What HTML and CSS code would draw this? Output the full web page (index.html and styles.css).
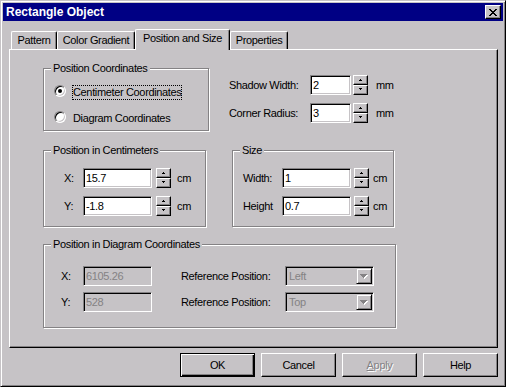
FILE: index.html
```html
<!DOCTYPE html>
<html lang="en">
  <head>
    <meta charset="UTF-8" />
    <title>Rectangle Object</title>
    <link rel="stylesheet" href="styles.css">
  </head>
  <body>
    <div class="window">
      <div class="titlebar">
        <span class="title">Rectangle Object</span>
        <span class="close-btn">
          <svg width="8" height="7" viewBox="0 0 8 7" shape-rendering="crispEdges">
            <path fill="#000" d="M0 0h2v1H0zM6 0h2v1H6zM1 1h2v1H1zM5 1h2v1H5zM2 2h4v1H2zM3 3h2v1H3zM2 4h4v1H2zM1 5h2v1H1zM5 5h2v1H5zM0 6h2v1H0zM6 6h2v1H6z"/>
          </svg>
        </span>
      </div>

      <div class="content">
        <div class="tabs">
          <div class="tab tab-pattern">Pattern</div>
          <div class="tab tab-gradient">Color Gradient</div>
          <div class="tab tab-position active">Position and Size</div>
          <div class="tab tab-props">Properties</div>
        </div>

        <div class="panel">
          <div class="row row-top">
            <div class="group group-coords">
              <span class="legend">Position Coordinates</span>
              <div class="radio-row first">
                <span class="radio checked"></span>
                <span class="radio-text focused">Centimeter Coordinates</span>
              </div>
              <div class="radio-row">
                <span class="radio"></span>
                <span class="radio-text">Diagram Coordinates</span>
              </div>
            </div>

            <div class="shadow-fields">
              <div class="field-row">
                <span class="lbl lbl-shadow">Shadow Width:</span>
                <span class="input in-short">2</span>
                <span class="spin"><span class="spin-btn"><i class="arr-up"></i></span><span class="spin-btn"><i class="arr-down"></i></span></span>
                <span class="unit unit-mm">mm</span>
              </div>
              <div class="field-row">
                <span class="lbl lbl-shadow">Corner Radius:</span>
                <span class="input in-short">3</span>
                <span class="spin"><span class="spin-btn"><i class="arr-up"></i></span><span class="spin-btn"><i class="arr-down"></i></span></span>
                <span class="unit unit-mm">mm</span>
              </div>
            </div>
          </div>

          <div class="row row-mid">
            <div class="group group-cm">
              <span class="legend">Position in Centimeters</span>
              <div class="fields">
                <div class="field-row">
                  <span class="lbl lbl-xy">X:</span>
                  <span class="input in-wide">15.7</span>
                  <span class="spin"><span class="spin-btn"><i class="arr-up"></i></span><span class="spin-btn"><i class="arr-down"></i></span></span>
                  <span class="unit unit-cm">cm</span>
                </div>
                <div class="field-row">
                  <span class="lbl lbl-xy">Y:</span>
                  <span class="input in-wide">-1.8</span>
                  <span class="spin"><span class="spin-btn"><i class="arr-up"></i></span><span class="spin-btn"><i class="arr-down"></i></span></span>
                  <span class="unit unit-cm">cm</span>
                </div>
              </div>
            </div>

            <div class="group group-size">
              <span class="legend">Size</span>
              <div class="fields">
                <div class="field-row">
                  <span class="lbl lbl-size">Width:</span>
                  <span class="input in-wide">1</span>
                  <span class="spin"><span class="spin-btn"><i class="arr-up"></i></span><span class="spin-btn"><i class="arr-down"></i></span></span>
                  <span class="unit unit-size">cm</span>
                </div>
                <div class="field-row">
                  <span class="lbl lbl-size">Height</span>
                  <span class="input in-wide">0.7</span>
                  <span class="spin"><span class="spin-btn"><i class="arr-up"></i></span><span class="spin-btn"><i class="arr-down"></i></span></span>
                  <span class="unit unit-size">cm</span>
                </div>
              </div>
            </div>
          </div>

          <div class="row row-bottom">
            <div class="group group-diagram">
              <span class="legend">Position in Diagram Coordinates</span>
              <div class="fields">
                <div class="field-row">
                  <span class="lbl lbl-dxy">X:</span>
                  <span class="input in-wide disabled">6105.26</span>
                  <span class="lbl lbl-ref">Reference Position:</span>
                  <span class="combo">
                    <span class="combo-text">Left</span>
                    <span class="combo-btn">
                      <svg width="8" height="5" viewBox="0 0 8 5" shape-rendering="crispEdges">
                        <path fill="#fff" d="M1 1h7v1H1zM2 2h5v1H2zM3 3h3v1H3zM4 4h1v1H4z"/>
                        <path fill="#848284" d="M0 0h7v1H0zM1 1h5v1H1zM2 2h3v1H2zM3 3h1v1H3z"/>
                      </svg>
                    </span>
                  </span>
                </div>
                <div class="field-row">
                  <span class="lbl lbl-dxy">Y:</span>
                  <span class="input in-wide disabled">528</span>
                  <span class="lbl lbl-ref">Reference Position:</span>
                  <span class="combo">
                    <span class="combo-text">Top</span>
                    <span class="combo-btn">
                      <svg width="8" height="5" viewBox="0 0 8 5" shape-rendering="crispEdges">
                        <path fill="#fff" d="M1 1h7v1H1zM2 2h5v1H2zM3 3h3v1H3zM4 4h1v1H4z"/>
                        <path fill="#848284" d="M0 0h7v1H0zM1 1h5v1H1zM2 2h3v1H2zM3 3h1v1H3z"/>
                      </svg>
                    </span>
                  </span>
                </div>
              </div>
            </div>
          </div>
        </div>

        <div class="buttons">
          <span class="btn default">OK</span>
          <span class="btn">Cancel</span>
          <span class="btn disabled"><u>A</u>pply</span>
          <span class="btn">Help</span>
        </div>
      </div>
    </div>
  </body>
</html>
```

FILE: styles.css
```css
* {
  box-sizing: border-box;
}
body {
  margin: 0;
  background: #c6c3c6;
  color: #000;
  font-family: "Liberation Sans", Arial, sans-serif;
  font-size: 11px;
  letter-spacing: -0.35px;
}
.window {
  width: 506px;
  height: 387px;
  padding: 2px;
  background: #c6c3c6;
  border: 1px solid;
  border-color: #c6c3c6 #000 #000 #c6c3c6;
  box-shadow: inset 1px 1px #fff, inset -1px -1px #848284;
}

/* title bar */
.titlebar {
  display: flex;
  align-items: center;
  justify-content: space-between;
  height: 18px;
  padding: 0 2px 0 3px;
  background: #000084;
}
.title {
  color: #fff;
  font-size: 12px;
  font-weight: bold;
  letter-spacing: 0;
}
.close-btn {
  display: flex;
  align-items: center;
  justify-content: center;
  width: 16px;
  height: 14px;
  background: #c6c3c6;
  border: 1px solid;
  border-color: #fff #000 #000 #fff;
  box-shadow: inset -1px -1px #848284;
}

.content {
  padding: 8px 5px 0 6px;
}

/* tabs */
.tabs {
  display: flex;
  align-items: flex-end;
  height: 20px;
  padding-left: 2px;
}
.tab {
  height: 18px;
  line-height: 16px;
  text-align: center;
  white-space: nowrap;
  background: #c6c3c6;
  border-top: 1px solid #fff;
  border-left: 1px solid #fff;
  border-right: 1px solid #000;
  border-radius: 2px 2px 0 0;
  box-shadow: inset -1px 0 #848284;
}
.tab-pattern { width: 46px; }
.tab-gradient { width: 78px; }
.tab-position { width: 95px; }
.tab-props { width: 58px; }
.tab.active {
  height: 21px;
  line-height: 17px;
  margin-bottom: -1px;
  position: relative;
  z-index: 1;
}

/* main panel */
.panel {
  height: 299px;
  padding-top: 18px;
  border: 1px solid;
  border-color: #fff #000 #000 #fff;
  box-shadow: inset -1px -1px #848284;
}
.row {
  display: flex;
  align-items: flex-start;
  padding-left: 33px;
}
.row-mid { margin-top: 19px; }
.row-bottom { margin-top: 17px; }

.group {
  border: 1px solid #848284;
  box-shadow: inset 1px 1px #fff, 1px 1px #fff;
}
.legend {
  display: block;
  width: fit-content;
  margin: -7px 0 0 7px;
  padding: 0 2px;
  line-height: 13px;
  background: #c6c3c6;
}
.group-coords { width: 166px; height: 63px; }
.group-cm { width: 163px; height: 77px; }
.group-size { width: 162px; height: 77px; margin-left: 26px; }
.group-diagram { width: 353px; height: 84px; }

/* radio buttons */
.radio-row {
  display: flex;
  align-items: flex-start;
  height: 16px;
  margin-top: 10px;
  padding-left: 10px;
}
.radio-row.first { margin-top: 8px; }
.radio {
  display: flex;
  align-items: center;
  justify-content: center;
  width: 12px;
  height: 12px;
  margin-top: 2px;
  border-radius: 50%;
  background: #fff;
  border: 1px solid;
  border-color: #848284 #fff #fff #848284;
  box-shadow: inset 1px 1px #000, inset -1px -1px #c6c3c6;
}
.radio.checked::after {
  content: "";
  width: 4px;
  height: 4px;
  border-radius: 50%;
  background: #000;
}
.radio-text {
  margin: 2px 0 0 6px;
  line-height: 13px;
  border: 1px solid transparent;
}
.radio-text.focused {
  border: 1px dotted #000;
}

/* fields */
.shadow-fields {
  margin-left: 20px;
  padding-top: 7px;
}
.field-row {
  display: flex;
  align-items: center;
  height: 20px;
  margin-bottom: 8px;
}
.group .fields {
  margin-top: 11px;
}
.group-cm .fields { padding-left: 20px; }
.group-size .fields { padding-left: 10px; }
.group-diagram .fields {
  margin-top: 15px;
  padding-left: 17px;
}
.group-diagram .field-row { margin-bottom: 6px; }

.lbl { white-space: nowrap; }
.lbl-shadow { width: 81px; }
.lbl-xy { width: 19px; }
.lbl-size { width: 39px; }
.lbl-dxy { width: 22px; }
.lbl-ref { width: 104px; margin-left: 29px; }

.input {
  height: 20px;
  padding-left: 2px;
  line-height: 18px;
  background: #fff;
  border: 1px solid;
  border-color: #848284 #fff #fff #848284;
  box-shadow: inset 1px 1px #000, inset -1px -1px #c6c3c6;
}
.in-short { width: 41px; }
.in-wide { width: 69px; }
.input.disabled {
  background: #c6c3c6;
  color: #848284;
}

.spin {
  display: flex;
  flex-direction: column;
  width: 15px;
  height: 20px;
  margin-left: 3px;
}
.shadow-fields .spin { margin-left: 2px; }
.group-cm .spin { margin-left: 4px; }
.spin-btn {
  display: flex;
  align-items: center;
  justify-content: center;
  height: 10px;
  background: #c6c3c6;
  border: 1px solid;
  border-color: #fff #000 #000 #fff;
  box-shadow: inset -1px -1px #848284;
}
.arr-up,
.arr-down {
  width: 1px;
  height: 1px;
  background: #000;
}
.arr-up {
  margin-top: -2px;
  box-shadow: -1px 1px #000, 0 1px #000, 1px 1px #000;
}
.arr-down {
  margin-top: -1px;
  box-shadow: -1px -1px #000, 0 -1px #000, 1px -1px #000;
}
.unit { white-space: nowrap; }
.unit-mm { margin-left: 8px; }
.unit-cm { margin-left: 6px; }
.unit-size { margin-left: 4px; }

/* combo box */
.combo {
  display: flex;
  align-items: center;
  justify-content: space-between;
  width: 89px;
  height: 20px;
  padding: 1px;
  background: #c6c3c6;
  border: 1px solid;
  border-color: #848284 #fff #fff #848284;
  box-shadow: inset 1px 1px #000, inset -1px -1px #c6c3c6;
}
.combo-text {
  padding-left: 2px;
  color: #848284;
}
.combo-btn {
  display: flex;
  align-items: center;
  justify-content: center;
  width: 16px;
  height: 16px;
  border: 1px solid;
  border-color: #c6c3c6 #000 #000 #c6c3c6;
  box-shadow: inset 1px 1px #fff, inset -1px -1px #848284;
}

/* dialog buttons */
.buttons {
  display: flex;
  justify-content: flex-end;
  gap: 6px;
  margin-top: 5px;
}
.btn {
  width: 75px;
  height: 24px;
  line-height: 22px;
  text-align: center;
  background: #c6c3c6;
  border: 1px solid;
  border-color: #fff #000 #000 #fff;
  box-shadow: inset -1px -1px #848284;
}
.btn.default {
  border-color: #000;
  box-shadow: inset 1px 1px #fff, inset -1px -1px #000, inset -2px -2px #848284;
}
.btn.disabled {
  color: #848284;
  text-shadow: 1px 1px #fff;
}
```
